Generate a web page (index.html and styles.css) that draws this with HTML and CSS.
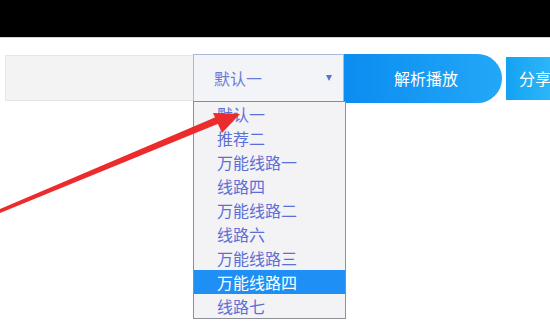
FILE: index.html
```html
<!DOCTYPE html>
<html lang="zh-CN">
<head>
    <meta charset="UTF-8">
    <meta name="viewport" content="width=device-width, initial-scale=1.0">
    <title>视频解析</title>
    <link rel="stylesheet" href="styles.css">
</head>
<body>

    <div class="topbar"></div>

    <!-- Search row -->
    <div class="search-row">
        <div class="url-input"></div>

        <div class="line-select">
            <div class="select-box">
                <span class="select-value">默认一</span>
                <span class="select-caret"></span>
            </div>

            <ul class="select-list">
                <li>默认一</li>
                <li>推荐二</li>
                <li>万能线路一</li>
                <li>线路四</li>
                <li>万能线路二</li>
                <li>线路六</li>
                <li>万能线路三</li>
                <li class="active">万能线路四</li>
                <li>线路七</li>
            </ul>
        </div>

        <button class="parse-btn">解析播放</button>
        <button class="share-btn">分享</button>
    </div>

    <!-- Red pointer arrow -->
    <svg class="pointer" width="550" height="322" viewBox="0 0 550 322">
        <polygon points="0,209 0,213 220,123 216,117" fill="#ec2c2c"/>
        <polygon points="240,114 213,113 222,133" fill="#ec2c2c"/>
    </svg>

</body>
</html>
```

FILE: styles.css
```css
body {
    margin: 0;
    padding: 0;
    width: 550px;
    height: 322px;
    overflow: hidden;
    background: #fff;
    font-family: 'Noto Sans CJK SC', 'Noto Sans', sans-serif;
    position: relative;
}

.topbar {
    height: 37px;
    background: #000;
    border-bottom: 1px solid #d4d4d4;
}

.search-row {
    display: flex;
    align-items: center;
    margin-top: 16px;
    height: 48px;
}

.url-input {
    width: 187px;
    margin-left: 5px;
    height: 44px;
    background: #f3f3f3;
    border: 1px solid #e6e6e6;
    border-right: none;
}

.line-select {
    position: relative;
    width: 151px;
    height: 48px;
}

.select-box {
    box-sizing: border-box;
    height: 48px;
    border: 1px solid #a9b8d6;
    background: #f3f4f8;
    display: flex;
    align-items: center;
    padding: 0 11px 0 20px;
}

.select-value {
    flex: 1;
    font-size: 16px;
    color: #6a7ad8;
}

.select-caret {
    width: 0;
    height: 0;
    border-left: 3px solid transparent;
    border-right: 3px solid transparent;
    border-top: 6px solid #5b70d8;
}

.select-list {
    position: absolute;
    top: 47px;
    left: 0;
    width: 151px;
    margin: 0;
    padding: 0;
    list-style: none;
    background: #f3f3f5;
    border: 1px solid #8e8e96;
    border-top: 1px solid #7c8ab0;
}

.select-list li {
    height: 24px;
    line-height: 24px;
    padding-left: 23px;
    font-size: 16px;
    color: #5b6fd6;
}

.select-list li.active {
    background: #1e8ff5;
    color: #fff;
}

.parse-btn {
    flex-shrink: 0;
    width: 158px;
    height: 49px;
    border: none;
    border-radius: 0 25px 25px 0;
    background: linear-gradient(90deg, #0b8cf0, #22a8f8);
    color: #fff;
    font-family: inherit;
    font-size: 16px;
    padding: 0;
    padding-left: 6px;
}

.share-btn {
    flex: 1;
    min-width: 0;
    margin-left: 4px;
    height: 43px;
    border: none;
    background: linear-gradient(90deg, #14a2f2, #2cb6f8);
    color: #fff;
    font-family: inherit;
    font-size: 16px;
    white-space: nowrap;
    overflow: hidden;
    text-align: left;
    padding: 0 0 0 13px;
}

.pointer {
    position: absolute;
    top: 0;
    left: 0;
    pointer-events: none;
}
```
